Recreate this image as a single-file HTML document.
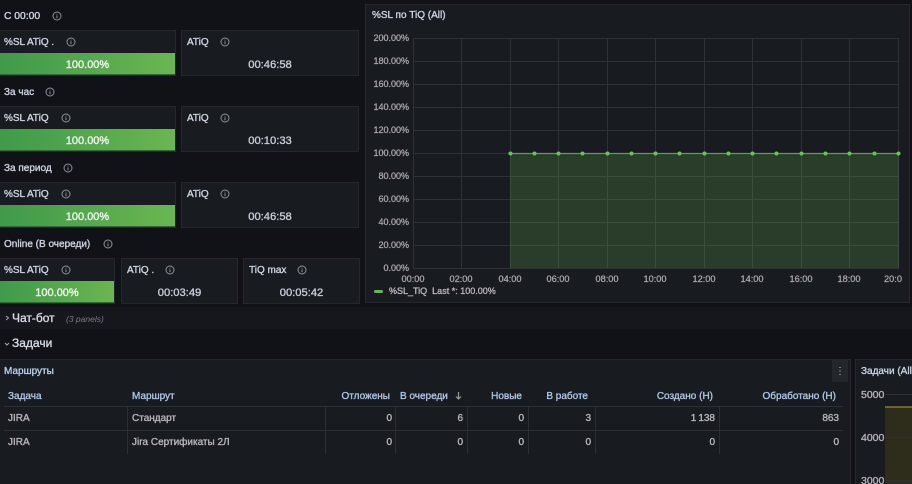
<!DOCTYPE html>
<html lang="ru"><head><meta charset="utf-8"><title>Dashboard</title>
<style>
html,body{margin:0;padding:0;background:#111217;width:912px;height:484px;overflow:hidden;}
#root{position:absolute;left:0;top:0;width:912px;height:484px;overflow:hidden;font-family:"Liberation Sans","Noto Sans CJK SC",sans-serif;color:#ccccdc;}
.p{position:absolute;background:#181b1f;border:1px solid #24272c;box-sizing:border-box;}
.t{position:absolute;white-space:nowrap;font-size:10px;line-height:12px;-webkit-text-stroke:.35px;transform:translateY(1px);}
.n{transform:none;}
.h{color:#ccd3e0;font-size:10px;}
.b{position:absolute;background:linear-gradient(90deg,#3f9a49,#6ab651);border-bottom:1px solid #2f6b35;box-sizing:border-box;color:#eef3ee;font-size:11px;line-height:24px;text-align:center;-webkit-text-stroke:.4px;}
.v{font-size:11.200px;color:#c9ccd6;text-align:center;}
.th{color:#a9c4e6;}
.td{color:#b4b6bd;}
.r{text-align:right;}
svg.i{position:absolute;width:10px;height:10px;}
svg text{stroke-width:.25px;font-family:"Liberation Sans",sans-serif;}
</style></head><body><div id="root">
<svg width="0" height="0" style="position:absolute"><defs><symbol id="inf" viewBox="0 0 10 10"><circle cx="5" cy="5" r="4" fill="none" stroke="#8e9098" stroke-width="1"/><path d="M5 4.400V7.200M5 2.700V3.500" stroke="#8e9098" stroke-width="1"/></symbol></defs></svg>

<!-- Row headings -->
<div class="t h" style="left:4px;top:10px;font-size:10.300px">С 00:00</div><svg class="i" style="left:52px;top:11px"><use href="#inf"/></svg>
<div class="t h" style="left:4px;top:86px">За час</div><svg class="i" style="left:45px;top:87px"><use href="#inf"/></svg>
<div class="t h" style="left:4px;top:162px">За период</div><svg class="i" style="left:63px;top:163px"><use href="#inf"/></svg>
<div class="t h" style="left:4px;top:238px">Online (В очереди)</div><svg class="i" style="left:103px;top:239px"><use href="#inf"/></svg>

<!-- Row 1 -->
<div class="p" style="left:-2px;top:30px;width:178px;height:46px"></div>
<div class="t h" style="left:4px;top:36px">%SL ATiQ .</div><svg class="i" style="left:66px;top:37px"><use href="#inf"/></svg>
<div class="b" style="left:0;top:53px;width:175px;height:22px">100.00%</div>
<div class="p" style="left:181px;top:30px;width:178px;height:46px"></div>
<div class="t h" style="left:187px;top:36px">ATiQ</div><svg class="i" style="left:220px;top:37px"><use href="#inf"/></svg>
<div class="t v" style="left:181px;width:178px;top:58px">00:46:58</div>

<!-- Row 2 -->
<div class="p" style="left:-2px;top:106px;width:178px;height:46px"></div>
<div class="t h" style="left:4px;top:112px">%SL ATiQ</div><svg class="i" style="left:61px;top:113px"><use href="#inf"/></svg>
<div class="b" style="left:0;top:129px;width:175px;height:22px">100.00%</div>
<div class="p" style="left:181px;top:106px;width:178px;height:46px"></div>
<div class="t h" style="left:187px;top:112px">ATiQ</div><svg class="i" style="left:220px;top:113px"><use href="#inf"/></svg>
<div class="t v" style="left:181px;width:178px;top:134px">00:10:33</div>

<!-- Row 3 -->
<div class="p" style="left:-2px;top:182px;width:178px;height:46px"></div>
<div class="t h" style="left:4px;top:188px">%SL ATiQ</div><svg class="i" style="left:61px;top:189px"><use href="#inf"/></svg>
<div class="b" style="left:0;top:205px;width:175px;height:22px">100.00%</div>
<div class="p" style="left:181px;top:182px;width:178px;height:46px"></div>
<div class="t h" style="left:187px;top:188px">ATiQ</div><svg class="i" style="left:220px;top:189px"><use href="#inf"/></svg>
<div class="t v" style="left:181px;width:178px;top:210px">00:46:58</div>

<!-- Row 4 -->
<div class="p" style="left:-2px;top:258px;width:117px;height:46px"></div>
<div class="t h" style="left:4px;top:264px">%SL ATiQ</div><svg class="i" style="left:61px;top:265px"><use href="#inf"/></svg>
<div class="b" style="left:0;top:281px;width:114px;height:22px">100.00%</div>
<div class="p" style="left:121px;top:258px;width:117px;height:46px"></div>
<div class="t h" style="left:127px;top:264px">ATiQ .</div><svg class="i" style="left:165px;top:265px"><use href="#inf"/></svg>
<div class="t v" style="left:121px;width:117px;top:286px">00:03:49</div>
<div class="p" style="left:243px;top:258px;width:117px;height:46px"></div>
<div class="t h" style="left:249px;top:264px">TiQ max</div><svg class="i" style="left:297px;top:265px"><use href="#inf"/></svg>
<div class="t v" style="left:243px;width:117px;top:286px">00:05:42</div>

<!-- Chart panel -->
<div class="p" style="left:365px;top:4px;width:545px;height:299px"></div>
<div class="t h" style="left:372px;top:9px">%SL по TiQ (All)</div>
<svg style="position:absolute;left:0;top:0" width="912" height="310">
<g stroke="#2e3136" stroke-width="1">
<path d="M413 38.500H899M413 61.500H899M413 84.500H899M413 107.500H899M413 130.500H899M413 153.500H899M413 176.500H899M413 199.500H899M413 222.500H899M413 245.500H899M413 268.500H899"/>
<path d="M413.500 38V268M461.500 38V268M510.500 38V268M558.500 38V268M607.500 38V268M655.500 38V268M704.500 38V268M752.500 38V268M801.500 38V268M849.500 38V268M898.500 38V268"/>
</g>
<rect x="510" y="153" width="389" height="115" fill="#6ab651" fill-opacity=".22"/>
<path d="M510 153.500H899" stroke="#5f9c55" stroke-width="1.200"/>
<g fill="#6cc060">
<circle cx="510.500" cy="153.500" r="2"/><circle cx="534.500" cy="153.500" r="2"/><circle cx="558.500" cy="153.500" r="2"/><circle cx="582.500" cy="153.500" r="2"/><circle cx="607.500" cy="153.500" r="2"/><circle cx="631.500" cy="153.500" r="2"/><circle cx="655.500" cy="153.500" r="2"/><circle cx="679.500" cy="153.500" r="2"/><circle cx="704.500" cy="153.500" r="2"/><circle cx="728.500" cy="153.500" r="2"/><circle cx="752.500" cy="153.500" r="2"/><circle cx="776.500" cy="153.500" r="2"/><circle cx="801.500" cy="153.500" r="2"/><circle cx="825.500" cy="153.500" r="2"/><circle cx="849.500" cy="153.500" r="2"/><circle cx="874.500" cy="153.500" r="2"/><circle cx="898.500" cy="153.500" r="2"/>
</g>
<g fill="#a8aab0" stroke="#a8aab0" font-size="9" text-anchor="end">
<text x="409" y="41">200.00%</text><text x="409" y="64">180.00%</text><text x="409" y="87">160.00%</text><text x="409" y="110">140.00%</text><text x="409" y="133">120.00%</text><text x="409" y="156">100.00%</text><text x="409" y="179">80.00%</text><text x="409" y="202">60.00%</text><text x="409" y="225">40.00%</text><text x="409" y="248">20.00%</text><text x="409" y="271">0.00%</text>
</g>
<g fill="#a8aab0" stroke="#a8aab0" font-size="9.200" text-anchor="middle">
<text x="413" y="282">00:00</text><text x="461" y="282">02:00</text><text x="510" y="282">04:00</text><text x="558" y="282">06:00</text><text x="607" y="282">08:00</text><text x="655" y="282">10:00</text><text x="704" y="282">12:00</text><text x="752" y="282">14:00</text><text x="801" y="282">16:00</text><text x="849" y="282">18:00</text><text x="893" y="282">20:0</text>
</g>
<rect x="374" y="290" width="9" height="3" rx="1.500" fill="#6ab651"/>
</svg>
<div class="t n" style="left:389px;top:285px;font-size:9px;color:#b4b6bd">%SL_TiQ&nbsp; Last *: 100.00%</div>

<!-- Collapsed rows -->
<div style="position:absolute;left:0;top:307px;width:912px;height:22px;background:#15171c"></div>
<svg style="position:absolute;left:4px;top:315px" width="6" height="6"><path d="M2 1L4.500 3L2 5" fill="none" stroke="#a8aab0" stroke-width="1"/></svg>
<div class="t n" style="left:12px;top:311px;font-size:12px;line-height:14px;color:#d5d9e4">Чат-бот</div>
<div class="t n" style="left:66px;top:313px;font-size:8.500px;font-style:italic;color:#7b7d85;-webkit-text-stroke:0">(3 panels)</div>
<svg style="position:absolute;left:4px;top:341px" width="6" height="6"><path d="M1 2L3 4L5 2" fill="none" stroke="#a8aab0" stroke-width="1"/></svg>
<div class="t n" style="left:12px;top:336px;font-size:12px;line-height:14px;color:#d5d9e4">Задачи</div>

<!-- Table panel -->
<div class="p" style="left:-2px;top:359px;width:853px;height:130px"></div>
<div class="t" style="left:4px;top:365px;color:#b7cbe6">Маршруты</div>
<div style="position:absolute;left:832px;top:360px;width:16px;height:22px;background:#23262b"></div>
<svg style="position:absolute;left:838px;top:366px" width="4" height="10"><path d="M2 1V2M2 4.500V5.500M2 8V9" stroke="#a8aab0" stroke-width="1.200"/></svg>
<div class="t th" style="left:8px;top:390px">Задача</div>
<div class="t th" style="left:132px;top:390px">Маршрут</div>
<div class="t th r" style="right:522px;top:390px">Отложены</div>
<div class="t th" style="left:400px;top:390px">В очереди</div>
<svg style="position:absolute;left:454px;top:391px" width="9" height="10"><path d="M4.500 1V8M2 5.500L4.500 8L7 5.500" fill="none" stroke="#9a9ca4" stroke-width="1.200"/></svg>
<div class="t th r" style="right:390px;top:390px">Новые</div>
<div class="t th r" style="right:324px;top:390px">В работе</div>
<div class="t th r" style="right:199px;top:390px">Создано (Н)</div>
<div class="t th r" style="right:76px;top:390px">Обработано (Н)</div>
<svg style="position:absolute;left:0;top:400px" width="850" height="60">
<path d="M4 6.500H843M4 30.500H843" stroke="#2b2e33"/>
<path d="M127.500 7V54M325.500 7V54M395.500 7V54M467.500 7V54M528.500 7V54M595.500 7V54M719.500 7V54" stroke="#2b2e33"/>
</svg>
<div class="t td" style="left:8px;top:412px">JIRA</div><div class="t td" style="left:132px;top:412px">Стандарт</div>
<div class="t td r" style="right:520px;top:412px">0</div><div class="t td r" style="right:449px;top:412px">6</div><div class="t td r" style="right:388px;top:412px">0</div><div class="t td r" style="right:321px;top:412px">3</div><div class="t td r" style="right:197px;top:412px">1&#8201;138</div><div class="t td r" style="right:73px;top:412px">863</div>
<div class="t td" style="left:8px;top:436px">JIRA</div><div class="t td" style="left:132px;top:436px">Jira Сертификаты 2Л</div>
<div class="t td r" style="right:520px;top:436px">0</div><div class="t td r" style="right:449px;top:436px">0</div><div class="t td r" style="right:388px;top:436px">0</div><div class="t td r" style="right:321px;top:436px">0</div><div class="t td r" style="right:197px;top:436px">0</div><div class="t td r" style="right:73px;top:436px">0</div>

<!-- Right panel -->
<div class="p" style="left:855px;top:359px;width:70px;height:130px"></div>
<div class="t" style="left:861px;top:365px;color:#c5d2e6">Задачи (All</div>
<svg style="position:absolute;left:855px;top:380px" width="57" height="104">
<rect x="30" y="27" width="27" height="77" fill="#f2cc0c" fill-opacity=".1"/>
<path d="M30 14.500H57M30 57.500H57M30 100.500H57" stroke="#2f3033"/>
<path d="M30 27H57" stroke="#a08a26" stroke-width="1.200"/>
</svg>
<div class="t" style="left:861px;top:388px;font-size:10.500px;color:#b0b2b8">5000</div>
<div class="t" style="left:861px;top:431px;font-size:10.500px;color:#b0b2b8">4000</div>
<div class="t" style="left:861px;top:474px;font-size:10.500px;color:#b0b2b8">3000</div>
</div></body></html>
